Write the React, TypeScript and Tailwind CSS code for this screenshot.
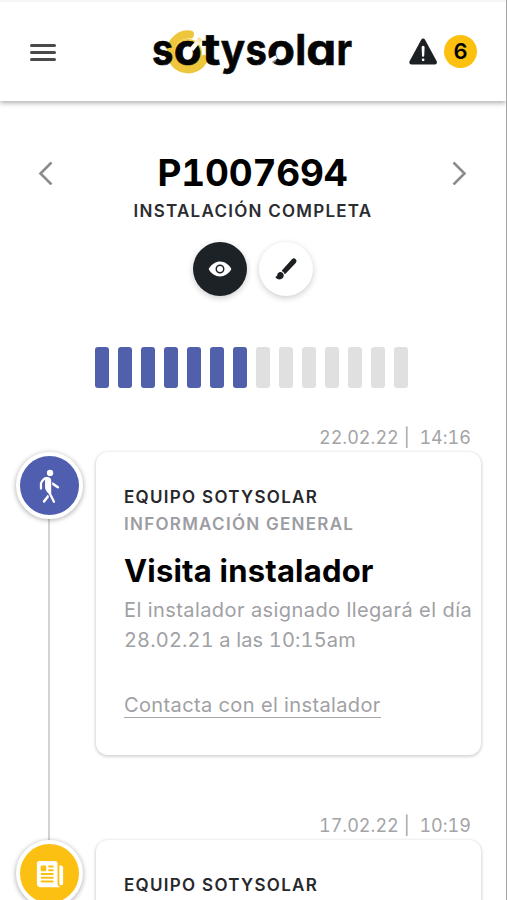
import type { ReactNode } from 'react';
import { IoWarning, IoEye, IoBrush, IoWalk, IoNewspaper } from 'react-icons/io5';

const bars = Array.from({ length: 14 }, (_, i) => i < 7);

// Each wordmark letter with its left edge and advance width.
const letters: [string, number, number][] = [
  ['s', 152, 21.4],
  ['o', 173.8, 28],
  ['t', 202, 18.4],
  ['y', 220.8, 24.4],
  ['s', 245.4, 21.4],
  ['o', 267, 28],
  ['l', 295.2, 11],
  ['a', 306.2, 30],
  ['r', 336.4, 15.6],
];

function Logo() {
  return (
    <svg width="210" height="66" viewBox="150 18 210 66" aria-label="sotysolar">
      <defs>
        <linearGradient id="fade" x1="0" y1="1" x2="1" y2="0">
          <stop offset="0" stopColor="#fff" />
          <stop offset="0.6" stopColor="#fdf6dc" />
          <stop offset="1" stopColor="#f5dc86" />
        </linearGradient>
      </defs>
      <path d="M190 33.5 A17.5 17.5 0 1 0 204 58" fill="none" stroke="#eec63c" strokeWidth="8" strokeLinecap="round" />
      <circle cx="188" cy="52" r="14" fill="#eec63c" />
      <circle cx="188" cy="52" r="8" fill="#fff" />
      <g fill="#050505" stroke="#050505" strokeWidth="0.6" className="font-[Inter,sans-serif] text-[43px] font-bold [font-feature-settings:'cv11']">
        {letters.map(([letter, x, width]) => (
          <text key={x} x={x} y="64" textLength={width} lengthAdjust="spacingAndGlyphs">{letter}</text>
        ))}
      </g>
      <path d="M191.5 48.5 L200.5 37.5" stroke="url(#fade)" strokeWidth="4.5" />
      <path d="M276.5 56 L268.5 60.5" stroke="#fff" strokeWidth="4" />
      <path d="M275.5 58.5 L271 63" stroke="#fff" strokeOpacity="0.5" strokeWidth="3" />
    </svg>
  );
}

function Entry({ date, time, color, icon, children }: {
  date: string; time: string; color: string; icon: ReactNode; children?: ReactNode;
}) {
  return (
    <section className="flex h-[388px] shrink-0">
      <div className="flex w-24 shrink-0 flex-col items-center pt-[26px]">
        <div className={`z-10 ml-[3px] flex size-[67px] shrink-0 items-center justify-center rounded-full border-4 border-white text-white shadow-[0_1px_4px_1px_rgba(0,0,0,0.25)] ${color}`}>
          {icon}
        </div>
        <div className="-mb-[26px] ml-px w-[2px] grow bg-[#d3d3d3]" />
      </div>
      <div className="flex w-[385px] flex-col">
        <p className="h-[26px] whitespace-pre pr-[10px] text-right text-[18px] leading-[23px] tracking-[0.02px] text-[#a3a4a7] tabular-nums">
          {date} |{'  '}{time}
        </p>
        <div className="h-[303px] rounded-[12px] bg-white pl-7 pt-[32px] shadow-[0_1px_3px_1px_rgba(0,0,0,0.16)]">
          <p className="text-[17px] font-semibold leading-[27px] tracking-[1.3px] text-[#27282b]">EQUIPO SOTYSOLAR</p>
          {children}
        </div>
      </div>
    </section>
  );
}

export default function App() {
  return (
    <main className="flex h-[900px] w-[507px] flex-col overflow-hidden border-r border-[#a5a5a5] bg-white font-[Inter,sans-serif]">
      <header className="flex h-[101px] shrink-0 items-center border-t-2 border-[#f5f5f5] pl-[30px] shadow-[0_2px_5px_rgba(0,0,0,0.32)]">
        <div className="mt-px flex w-[26px] flex-col gap-[4px]">
          <span className="h-[3px] rounded bg-[#4a4a4a]" />
          <span className="h-[3px] rounded bg-[#4a4a4a]" />
          <span className="h-[3px] rounded bg-[#4a4a4a]" />
        </div>
        <div className="ml-[94px]"><Logo /></div>
        <IoWarning className="-mt-px ml-[46px] size-[35px] text-[#1d2023]" />
        <span className="ml-[3px] flex size-[33px] items-center justify-center rounded-full bg-[#fdc00f] text-[22px] font-semibold">6</span>
      </header>

      <div className="mt-[49px] flex h-[46px] shrink-0 items-center justify-between pl-[38px] pr-[39px]">
        <svg width="15" height="24" viewBox="0 0 15 24" fill="none" stroke="#8b8b8f" strokeWidth="2.6"><path d="M13.5 1.5 L2.5 12.5 L13.5 23.5" /></svg>
        <h1 className="text-[37px] font-bold tracking-[-0.2px] text-black tabular-nums">P1007694</h1>
        <svg width="15" height="24" viewBox="0 0 15 24" fill="none" stroke="#8b8b8f" strokeWidth="2.6"><path d="M1.5 1.5 L12.5 12.5 L1.5 23.5" /></svg>
      </div>
      <p className="mt-[2px] h-[27px] shrink-0 text-center text-[17px] font-semibold leading-[27px] tracking-[1.25px] text-[#2b2c30]">INSTALACIÓN COMPLETA</p>
      <div className="ml-[193px] mt-[17px] flex shrink-0 gap-3">
        <button className="flex size-[54px] items-center justify-center rounded-full bg-[#1d2226] text-white shadow-[0_2px_6px_rgba(0,0,0,0.2)]"><IoEye className="size-6" /></button>
        <button className="flex size-[54px] items-center justify-center rounded-full bg-white text-[#1d2023] shadow-[0_2px_6px_rgba(0,0,0,0.2)]"><IoBrush className="size-6" /></button>
      </div>
      <div className="ml-[95px] mt-[51px] flex h-[41px] w-[313px] shrink-0 justify-between">
        {bars.map((done, i) => (
          <span key={i} className={`w-[14px] rounded-[3px] ${done ? 'bg-[#5060aa]' : 'bg-[#e0e0e0]'}`} />
        ))}
      </div>

      <div className="mt-[38px] flex flex-col">
        <Entry date="22.02.22" time="14:16" color="bg-[#4f5eaf]" icon={<IoWalk className="size-[36px]" />}>
          <p className="text-[17px] font-semibold leading-[27px] tracking-[1.28px] text-[#9b9da2]">INFORMACIÓN GENERAL</p>
          <h2 className="mt-[12px] text-[31px] font-bold leading-[42px] tracking-[0.2px] text-black">Visita instalador</h2>
          <p className="mt-[3px] whitespace-nowrap text-[20px] leading-[30px] tracking-[0.42px] text-[#a0a1a4]">El instalador asignado llegará el día<br /><span className="tracking-[0.15px] tabular-nums">28.02.21 a las 10:15am</span></p>
          <a className="mt-[38px] inline-block border-b-[1.5px] border-[#a7a8ab] text-[20px] leading-[24px] tracking-[0.37px] text-[#a0a1a4]">Contacta con el instalador</a>
        </Entry>
        <Entry date="17.02.22" time="10:19" color="bg-[#fcc013]" icon={<IoNewspaper className="size-[30px]" />} />
      </div>
    </main>
  );
}
